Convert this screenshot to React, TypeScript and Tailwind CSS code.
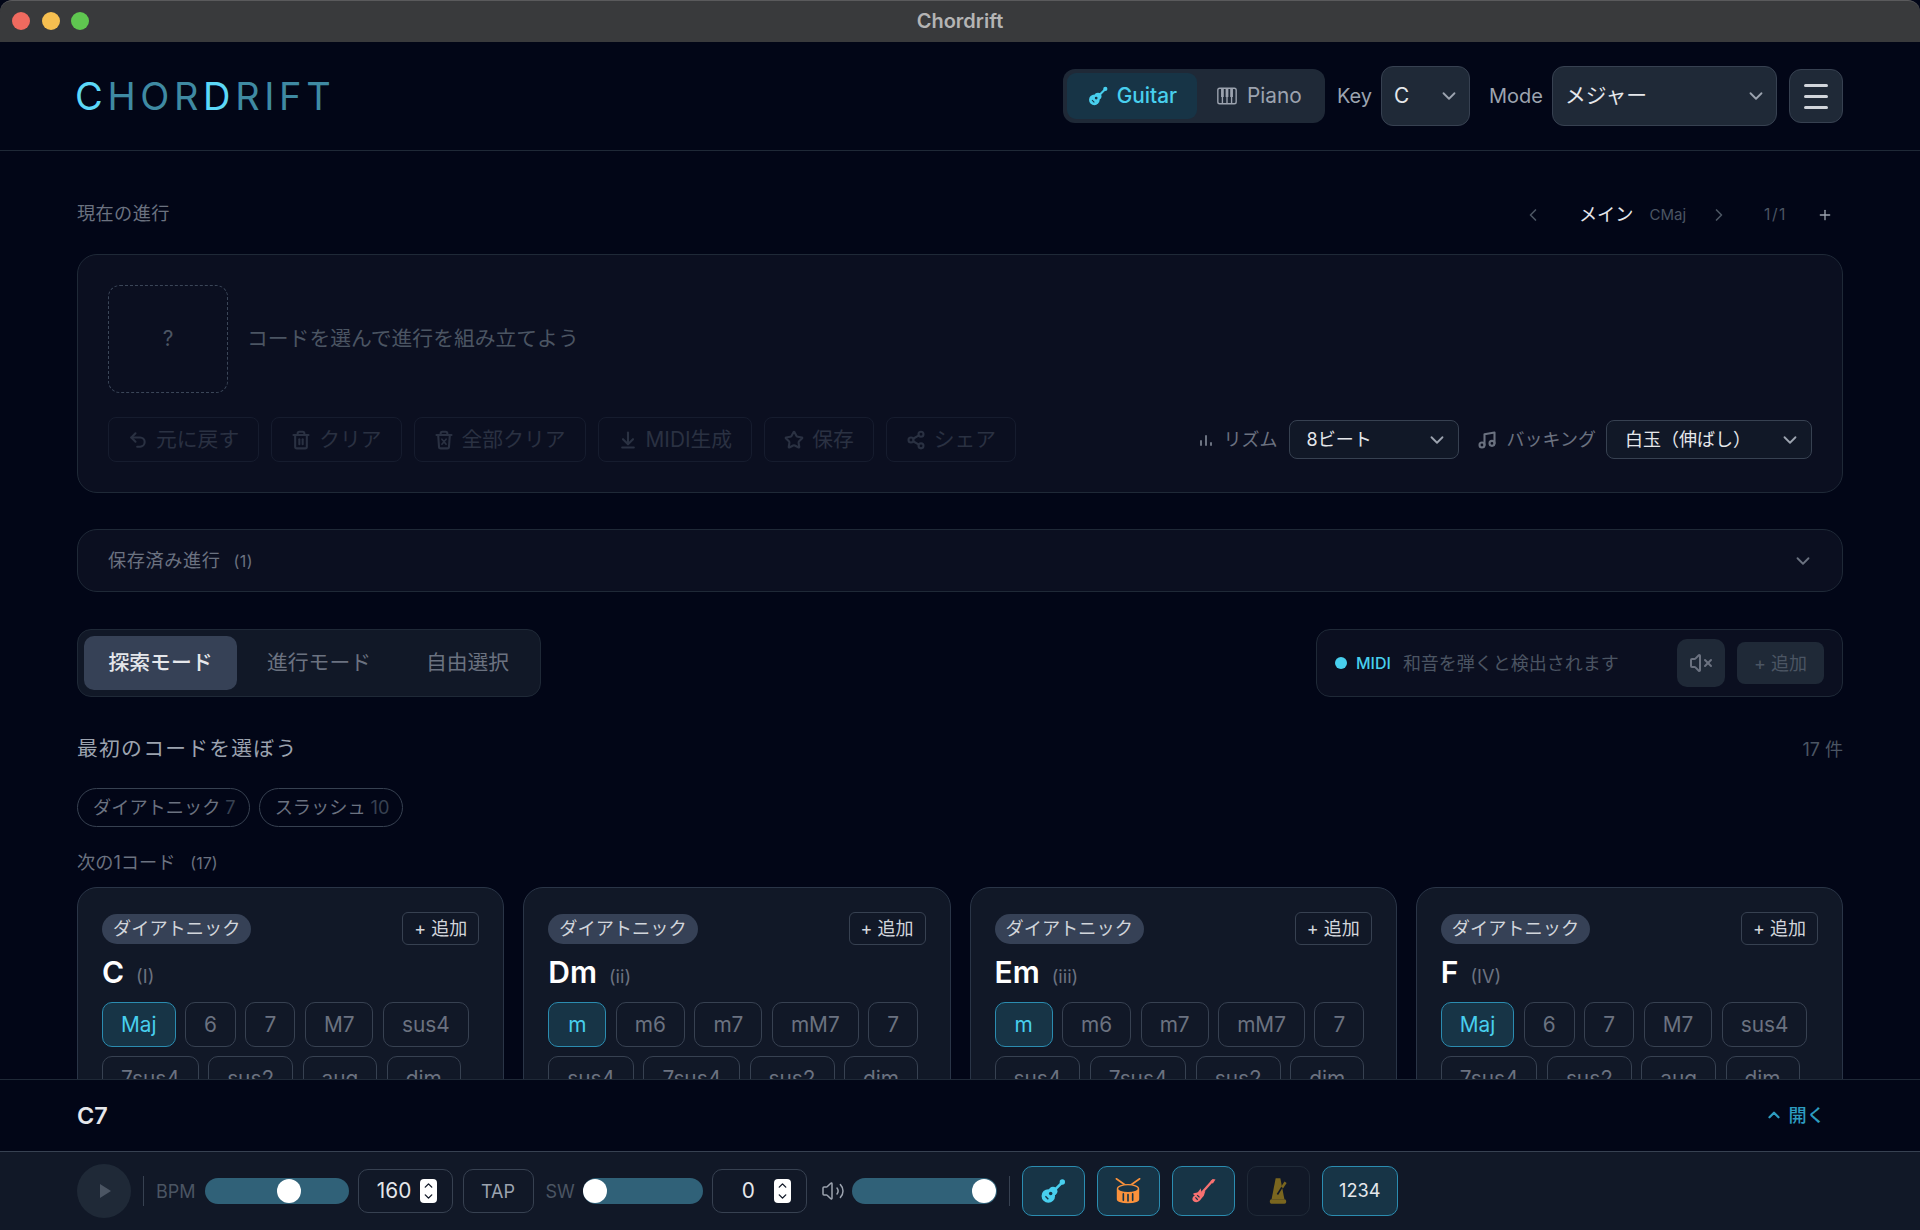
import { ChevronDown, ChevronLeft, ChevronRight, ChevronUp, Plus, Undo2, Trash2, ArrowDownToLine, Star, Share2, VolumeX, Volume2, Music } from "lucide-react";
import type { ComponentType } from "react";

type Chord = { name: string; degree: string; types: string[] };

const chords: Chord[] = [
  { name: "C", degree: "(I)", types: ["Maj", "6", "7", "M7", "sus4", "7sus4", "sus2", "aug", "dim"] },
  { name: "Dm", degree: "(ii)", types: ["m", "m6", "m7", "mM7", "7", "sus4", "7sus4", "sus2", "dim"] },
  { name: "Em", degree: "(iii)", types: ["m", "m6", "m7", "mM7", "7", "sus4", "7sus4", "sus2", "dim"] },
  { name: "F", degree: "(IV)", types: ["Maj", "6", "7", "M7", "sus4", "7sus4", "sus2", "aug", "dim"] },
];

function TrashX({ size = 20, strokeWidth = 2.5 }: { size?: number; strokeWidth?: number }) {
  return (
    <svg width={size} height={size} viewBox="0 0 24 24" fill="none" stroke="currentColor" strokeWidth={strokeWidth} strokeLinecap="round" strokeLinejoin="round">
      <path d="M3 6h18M8 6V4a2 2 0 0 1 2-2h4a2 2 0 0 1 2 2v2" />
      <path d="M19 6l-1 14a2 2 0 0 1-2 2H8a2 2 0 0 1-2-2L5 6" />
      <path d="M9.500 11l5 6M14.500 11l-5 6" strokeWidth="2" />
    </svg>
  );
}

const actions: { label: string; icon: ComponentType<{ size?: number; strokeWidth?: number }> }[] = [
  { label: "元に戻す", icon: Undo2 },
  { label: "クリア", icon: Trash2 },
  { label: "全部クリア", icon: TrashX },
  { label: "MIDI生成", icon: ArrowDownToLine },
  { label: "保存", icon: Star },
  { label: "シェア", icon: Share2 },
];

function GuitarIcon({ className, hole }: { className?: string; hole: string }) {
  return (
    <svg viewBox="0 0 24 24" className={className} fill="currentColor">
      <circle cx="8" cy="16.200" r="5.800" />
      <circle cx="12" cy="12.200" r="3.800" />
      <path d="M12 12.500L19.500 5" stroke="currentColor" strokeWidth="2.200" />
      <circle cx="20" cy="4.300" r="2.300" />
      <circle cx="10" cy="14.200" r="1.500" fill={hole} />
      <path d="M5.500 16.500l2.500 2.500" stroke={hole} strokeWidth="1.200" />
    </svg>
  );
}

function ElectricIcon({ className }: { className?: string }) {
  return (
    <svg viewBox="0 0 24 24" className={className} fill="currentColor">
      <path d="M11 13.500L20 3.500" stroke="currentColor" strokeWidth="2" />
      <path d="M18.500 3.500l1.800-1.800 2.400.4-2.200 3.400-1.500-.5z" />
      <path d="M9.800 9.300l1 3.700 3.200-1-1 3.200c-.4 1.500-1.500 2-2.500 3.500-1.500 2.500-4 3.600-6 2.600-1.800-.9-2.100-3-.8-4.500l1.300-1-1.600-1.300c1-1 2.500-1 3.600-1.300 1.200-.3 1.600-2.100 2.800-3z" />
      <path d="M7 15.500l2 2M5.500 17.500l2 2" stroke="#173446" strokeWidth="1.100" fill="none" />
    </svg>
  );
}

function DrumIcon({ className }: { className?: string }) {
  return (
    <svg viewBox="0 0 24 24" className={className} fill="none" stroke="currentColor" strokeWidth="1.200" strokeLinecap="round">
      <path d="M2 1.500l8.500 6M22 1.500l-8.500 6" strokeWidth="1.400" />
      <path d="M3 10.500v8.500c0 1.700 4 3 9 3s9-1.300 9-3v-8.500" fill="currentColor" />
      <ellipse cx="12" cy="10" rx="9" ry="3.500" fill="#173446" />
      <path d="M8 14.500v5.500M12 15v5.500M16 14.500v5.500" stroke="#173446" strokeWidth="1.400" />
    </svg>
  );
}

function MetronomeIcon({ className }: { className?: string }) {
  return (
    <svg viewBox="0 0 24 24" className={className} fill="currentColor">
      <path d="M10 1h4l3.500 18h-11z" />
      <rect x="5" y="19" width="14" height="4" rx="1.500" />
      <path d="M11.500 15l5-8" stroke="#111827" strokeWidth="1.400" />
      <path d="M15.500 9l3-4.500" stroke="currentColor" strokeWidth="2.200" />
    </svg>
  );
}

function PianoIcon({ className }: { className?: string }) {
  return (
    <svg viewBox="0 0 24 24" className={className} fill="none" stroke="currentColor" strokeWidth="1.500">
      <rect x="2" y="3.500" width="20" height="17" rx="2" />
      <path d="M7 13v7.500M12 13v7.500M17 13v7.500" />
      <path d="M5.500 3.500h3v9.500h-3zM10.500 3.500h3v9.500h-3zM15.500 3.500h3v9.500h-3z" fill="currentColor" stroke="none" />
    </svg>
  );
}

function BarsIcon({ className }: { className?: string }) {
  return (
    <svg viewBox="0 0 16 16" className={className} fill="currentColor">
      <rect x="2" y="8" width="2" height="6" rx="1" />
      <rect x="7" y="3" width="2" height="11" rx="1" />
      <rect x="12" y="10" width="2" height="4" rx="1" />
    </svg>
  );
}

function Spinner() {
  return (
    <span className="flex h-6 w-[17px] shrink-0 flex-col items-center justify-center rounded-[4px] bg-white text-[#111827]">
      <ChevronUp size={13} strokeWidth={2.500} className="-mb-[2px]" />
      <ChevronDown size={13} strokeWidth={2.500} />
    </span>
  );
}

function NumberBox({ value }: { value: string }) {
  return (
    <div className="flex h-11 w-[95px] items-center rounded-[10px] border border-[#374151] pl-[10px] pr-[15px] text-[20.800px] text-[#e5e7eb]">
      <span className="flex-1 text-center">{value}</span>
      <Spinner />
    </div>
  );
}

function Slider({ width, pos }: { width: string; pos: string }) {
  return (
    <div className={`flex h-[26px] items-center rounded-full bg-[#306178] ${width} ${pos}`}>
      <span className="h-6 w-6 rounded-full bg-white" />
    </div>
  );
}

function ChordCard({ chord }: { chord: Chord }) {
  return (
    <div className="h-[300px] rounded-[20px] border border-[#2a3547] bg-[#111827] px-[24px] pt-[24px]">
      <div className="flex items-center justify-between">
        <span className="flex h-[30px] items-center rounded-full bg-[#364156] px-[11px] text-[18.200px] text-[#d1d5db]">ダイアトニック</span>
        <span className="flex h-[33px] w-[77px] items-center justify-center rounded-md border border-[#374151] text-[18px] text-[#d1d5db]">+ 追加</span>
      </div>
      <div className="mt-[9px] flex h-[36px] items-baseline gap-[12px]">
        <span className="text-[30px] font-semibold leading-9 text-white">{chord.name}</span>
        <span className="text-[18.200px] text-[#6b7280]">{chord.degree}</span>
      </div>
      <div className="mt-[12px] flex flex-wrap gap-x-[9.500px] gap-y-[9px]">
        {chord.types.map((t, i) => (
          <span
            key={t}
            className={`flex h-[45px] min-w-[50px] items-center justify-center rounded-[10px] border px-[18px] text-[20.800px] ${
              i === 0 ? "min-w-[58px] border-[#2b8cb0] bg-[#173446] text-[#48cfee]" : "border-[#374151] text-[#6b7280]"
            }`}
          >
            {t}
          </span>
        ))}
      </div>
    </div>
  );
}

export default function App() {
  return (
    <div className="flex h-screen w-full flex-col overflow-hidden bg-[#020617] font-['Inter','Noto_Sans_CJK_JP',sans-serif]">
      {/* window chrome */}
      <div className="relative flex h-[42px] shrink-0 items-center justify-center rounded-t-[12px] border-t border-[#5a5a5c] bg-[#393a3c] pb-[2px]">
        <div className="absolute left-[12px] flex gap-[11.500px]">
          <span className="h-[18px] w-[18px] rounded-full bg-[#ef6a5f]" />
          <span className="h-[18px] w-[18px] rounded-full bg-[#f6bf50]" />
          <span className="h-[18px] w-[18px] rounded-full bg-[#5fc650]" />
        </div>
        <span className="text-[20px] font-semibold text-[#b4b4b4]">Chordrift</span>
      </div>

      {/* header */}
      <header className="flex h-[109px] shrink-0 items-center justify-between border-b border-[#1f2937] px-[77px]">
        <div className="-ml-[2px] text-[38px] font-normal tracking-[0.122em] text-[#3f8aa3]">
          <span className="text-[#5cd8f8]">C</span>HOR<span className="text-[#5cd8f8]">D</span>RIFT
        </div>
        <div className="flex items-center">
          <div className="flex h-[54px] w-[262px] items-center rounded-[12px] bg-[#1f2937] p-[4px] text-[20.800px]">
            <span className="flex h-[46px] w-[130px] items-center justify-center gap-[8px] rounded-[9px] bg-[#173446] font-medium text-[#48cfee]">
              <GuitarIcon className="h-[22px] w-[22px]" hole="#173446" />
              Guitar
            </span>
            <span className="flex h-[46px] flex-1 items-center justify-center gap-[9px] text-[#9ca3af]">
              <PianoIcon className="h-[22px] w-[22px]" />
              Piano
            </span>
          </div>
          <span className="ml-[12px] text-[20px] text-[#9ca3af]">Key</span>
          <div className="ml-[9px] flex h-[60px] w-[89px] items-center justify-between rounded-[12px] border border-[#374151] bg-[#1f2937] pl-[12px] pr-[9px] text-[20.800px] text-[#e5e7eb]">
            C
            <ChevronDown size={22} className="text-[#9ca3af]" />
          </div>
          <span className="ml-[19px] text-[20px] text-[#9ca3af]">Mode</span>
          <div className="ml-[9px] flex h-[60px] w-[225px] items-center justify-between rounded-[12px] border border-[#374151] bg-[#1f2937] pl-[12px] pr-[9px] text-[20.800px] text-[#e5e7eb]">
            メジャー
            <ChevronDown size={22} className="text-[#9ca3af]" />
          </div>
          <div className="ml-[12px] flex h-[54px] w-[54px] flex-col items-center justify-center gap-[8px] rounded-[12px] border border-[#374151] bg-[#1f2937]">
            <span className="h-[3px] w-6 rounded-full bg-[#d1d5db]" />
            <span className="h-[3px] w-6 rounded-full bg-[#d1d5db]" />
            <span className="h-[3px] w-6 rounded-full bg-[#d1d5db]" />
          </div>
        </div>
      </header>

      {/* main */}
      <main className="min-h-0 flex-1 overflow-hidden px-[77px]">
        <div className="mt-[49px] flex h-[28px] items-center justify-between">
          <span className="text-[18.200px] tracking-[0.02em] text-[#6b7280]">現在の進行</span>
          <div className="flex items-center pt-[2px] text-[#4b5563]">
            <ChevronLeft size={20} />
            <span className="ml-[36px] text-[18.200px] text-[#e5e7eb]">メイン</span>
            <span className="ml-[16px] text-[15px]">CMaj</span>
            <ChevronRight size={20} className="ml-[23px]" />
            <span className="ml-[35px] text-[15.600px] tracking-[0.1em]">1/1</span>
            <Plus size={16} className="ml-[30px] mr-[10px] text-[#9ca3af]" />
          </div>
        </div>

        <section className="mt-[26px] h-[239px] rounded-[20px] border border-[#1f2937] bg-[#0b0f20] px-[30px] pt-[30px]">
          <div className="flex items-center gap-[19px]">
            <div className="flex h-[108px] w-[120px] items-center justify-center rounded-[12px] border border-dashed border-[#3b4658] text-[20.800px] text-[#4b5563]">?</div>
            <span className="text-[20.800px] text-[#4b5563]">コードを選んで進行を組み立てよう</span>
          </div>
          <div className="mt-[24px] flex items-center justify-between">
            <div className="flex gap-[12px]">
              {actions.map(({ label, icon: Icon }) => (
                <span key={label} className="flex h-[45px] items-center gap-[8px] rounded-[8px] border border-[#161c2e] px-[19px] text-[20.800px] text-[#2a3142]">
                  <Icon size={20} strokeWidth={2.500} />
                  {label}
                </span>
              ))}
            </div>
            <div className="flex items-center text-[18px] text-[#6b7280]">
              <BarsIcon className="h-4 w-4" />
              <span className="ml-[10px]">リズム</span>
              <div className="ml-[11px] flex h-[39px] w-[170px] items-center justify-between rounded-[8px] border border-[#374151] bg-[#111827] pl-[17px] pr-[10px] text-[#e5e7eb]">
                8ビート
                <ChevronDown size={22} className="text-[#9ca3af]" />
              </div>
              <Music size={20} strokeWidth={2.500} className="ml-[18px]" />
              <span className="ml-[10px]">バッキング</span>
              <div className="ml-[10px] flex h-[39px] w-[206px] items-center justify-between rounded-[8px] border border-[#374151] bg-[#111827] pl-[18px] pr-[10px] text-[#e5e7eb]">
                白玉（伸ばし）
                <ChevronDown size={22} className="text-[#9ca3af]" />
              </div>
            </div>
          </div>
        </section>

        <section className="mt-[36px] flex h-[63px] items-center justify-between rounded-[20px] border border-[#1f2937] bg-[#0b0f20] pl-[30px] pr-[28px] text-[18.200px] tracking-[0.03em] text-[#6b7280]">
          <span>保存済み進行<span className="ml-[13px] text-[16px]">(1)</span></span>
          <ChevronDown size={22} />
        </section>

        <div className="mt-[37px] flex items-center justify-between">
          <div className="flex h-[68px] items-center rounded-[14px] border border-[#1f2937] bg-[#111827] p-[6px] text-[20.800px] text-[#6b7280]">
            <span className="flex h-[54px] w-[153px] items-center justify-center rounded-[10px] bg-[#364156] font-medium text-[#e5e7eb]">探索モード</span>
            <span className="flex w-[164px] justify-center">進行モード</span>
            <span className="flex w-[133px] justify-center">自由選択</span>
          </div>
          <div className="flex h-[68px] w-[527px] items-center rounded-[14px] border border-[#1f2937] bg-[#0b0f20] pl-[18px] pr-[18px]">
            <span className="h-3 w-3 rounded-full bg-[#48cfee]" />
            <span className="ml-[9px] text-[16px] font-medium text-[#48cfee]">MIDI</span>
            <span className="ml-[12px] text-[18px] text-[#4b5563]">和音を弾くと検出されます</span>
            <span className="ml-auto flex h-[48px] w-[48px] items-center justify-center rounded-[10px] bg-[#1f2937] text-[#6b7280]">
              <VolumeX size={24} />
            </span>
            <span className="ml-[12px] flex h-[42px] w-[87px] items-center justify-center rounded-[8px] bg-[#1f2937] text-[18px] text-[#4b5563]">+ 追加</span>
          </div>
        </div>

        <div className="mt-[38px] flex h-[28px] items-center justify-between">
          <span className="text-[20.800px] tracking-[0.06em] text-[#9ca3af]">最初のコードを選ぼう</span>
          <span className="text-[18px] text-[#4b5563]">17 件</span>
        </div>

        <div className="mt-[25px] flex gap-[9px]">
          <span className="flex h-[39px] items-center gap-[5px] rounded-full border border-[#374151] pl-[15px] pr-[13px] text-[18.200px] text-[#6b7280]">
            ダイアトニック <span className="text-[#374151]">7</span>
          </span>
          <span className="flex h-[39px] items-center gap-[5px] rounded-full border border-[#374151] pl-[15px] pr-[13px] text-[18.200px] text-[#6b7280]">
            スラッシュ <span className="text-[#374151]">10</span>
          </span>
        </div>

        <div className="mt-[23px] h-[24px] text-[18.200px] leading-6 text-[#6b7280]">
          次の1コード<span className="ml-[15px] text-[16px]">(17)</span>
        </div>

        <div className="mt-[13px] grid grid-cols-4 gap-[19px]">
          {chords.map((c) => (
            <ChordCard key={c.name} chord={c} />
          ))}
        </div>
      </main>

      {/* current chord strip */}
      <div className="flex h-[72px] shrink-0 items-center justify-between border-t border-[#1f2937] bg-[#020617] pl-[77px] pr-[20px]">
        <span className="text-[23.400px] font-semibold text-[#e5e7eb]">C7</span>
        <span className="mr-[75px] flex items-center gap-[6px] text-[18.200px] font-medium text-[#2d9cc0]">
          <ChevronUp size={18} strokeWidth={3} />
          開く
        </span>
      </div>

      {/* transport */}
      <footer className="flex h-[79px] shrink-0 items-center border-t border-[#374151] bg-[#111827] pl-[77px]">
        <span className="flex h-[54px] w-[54px] items-center justify-center rounded-full bg-[#1f2937]">
          <span className="ml-[2px] h-0 w-0 border-y-[7px] border-l-[11px] border-y-transparent border-l-[#4b5563]" />
        </span>
        <span className="ml-[12px] h-[30px] w-px bg-[#374151]" />
        <span className="ml-[12px] text-[18px] text-[#4b5563]">BPM</span>
        <div className="ml-[9px]"><Slider width="w-[144px]" pos="pl-[72px]" /></div>
        <div className="ml-[9px]"><NumberBox value="160" /></div>
        <span className="ml-[10px] flex h-11 w-[71px] items-center justify-center rounded-[10px] border border-[#374151] text-[18px] text-[#9ca3af]">TAP</span>
        <span className="ml-[12px] text-[18px] text-[#4b5563]">SW</span>
        <div className="ml-[8px]"><Slider width="w-[120px]" pos="pl-0" /></div>
        <div className="ml-[9px]"><NumberBox value="0" /></div>
        <Volume2 size={24} strokeWidth={1.500} className="ml-[14px] text-[#9ca3af]" />
        <div className="ml-[7px]"><Slider width="w-[145px]" pos="pl-[120px]" /></div>
        <span className="ml-[12px] h-[30px] w-px bg-[#374151]" />
        <div className="ml-[12px] flex gap-[12px]">
          <span className="flex h-[50px] w-[63px] items-center justify-center rounded-[10px] border border-[#2b8cb0] bg-[#173446] text-[#48cfee]"><GuitarIcon className="h-7 w-7" hole="#173446" /></span>
          <span className="flex h-[50px] w-[63px] items-center justify-center rounded-[10px] border border-[#2b8cb0] bg-[#173446] text-[#fb923c]"><DrumIcon className="h-7 w-7" /></span>
          <span className="flex h-[50px] w-[63px] items-center justify-center rounded-[10px] border border-[#2b8cb0] bg-[#173446] text-[#f87171]"><ElectricIcon className="h-7 w-7" /></span>
          <span className="flex h-[50px] w-[63px] items-center justify-center rounded-[10px] border border-[#1f2937] text-[#7a661f]"><MetronomeIcon className="h-7 w-7" /></span>
          <span className="flex h-[50px] w-[76px] items-center justify-center rounded-[10px] border border-[#2b8cb0] bg-[#173446] text-[18.200px] text-[#e5e7eb]">1234</span>
        </div>
      </footer>
    </div>
  );
}
